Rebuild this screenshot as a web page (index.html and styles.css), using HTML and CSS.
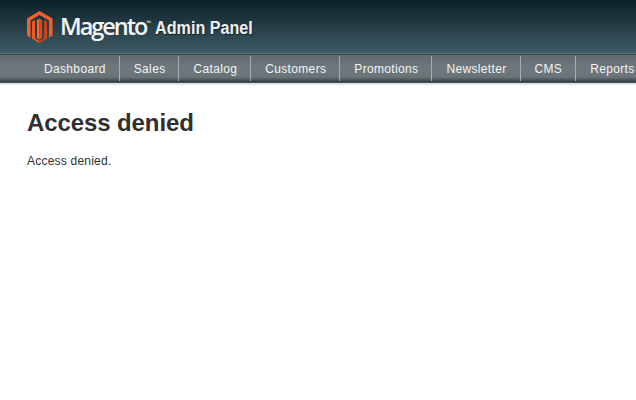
FILE: index.html
```html
<!DOCTYPE html>
<html lang="en">
<head>
<meta charset="utf-8">
<title>Access denied</title>
<link rel="stylesheet" href="styles.css">
</head>
<body>
<header class="header">
  <svg class="logo-mark" width="28" height="32" viewBox="0 0 28 32" aria-hidden="true">
    <path fill="#f4602c" d="M13.5 0 L26.5 7.5 V24.5 L23 26.5 V9.5 L13.5 4 L4.5 9.5 V26.5 L1 24.5 V7.5 Z"/>
    <path fill="#f66a34" d="M11 9 L13.5 7.5 V28.5 L11 27 Z"/>
    <path fill="#dd4a1c" d="M13.5 7.5 L16 9 V27 L13.5 28.5 Z"/>
    <path fill="#f0561f" d="M6 10.5 L9 9 V27.5 L13.5 30 V32 L6 27.8 Z"/>
    <path fill="#cc4016" d="M21 10.5 L18 9 V27.5 L13.5 30 V32 L21 27.8 Z"/>
  </svg>
  <span class="brand">Magento<sup class="tm">™</sup></span>
  <span class="panel">Admin Panel</span>
</header>
<nav class="nav">
  <a class="nav-item">Dashboard</a>
  <a class="nav-item">Sales</a>
  <a class="nav-item">Catalog</a>
  <a class="nav-item">Customers</a>
  <a class="nav-item">Promotions</a>
  <a class="nav-item">Newsletter</a>
  <a class="nav-item">CMS</a>
  <a class="nav-item">Reports</a>
</nav>
<main class="content">
  <h1 class="title">Access denied</h1>
  <p class="message">Access denied.</p>
</main>
</body>
</html>
```
FILE: styles.css
```css
html, body {
  margin: 0;
  padding: 0;
  height: 100%;
  overflow: hidden;
  background: #fff;
  font-family: "Liberation Sans", Arial, sans-serif;
}
.header {
  height: 54px;
  box-sizing: border-box;
  display: flex;
  align-items: center;
  padding: 0 0 0 26px;
  background: linear-gradient(#0b2128, #3f5a64);
  border-bottom: 1px solid #5a7179;
  color: #fff;
}
.logo-mark {
  flex: none;
  margin-right: 6px;
}
.brand {
  font-family: "Open Sans", sans-serif;
  font-size: 23.5px;
  font-weight: 600;
  letter-spacing: -2px;
  line-height: 1;
  color: #f4f6f6;
  margin-right: 4px;
}
.tm {
  font-size: 6px;
  font-weight: 400;
  letter-spacing: 0;
  vertical-align: 10px;
  line-height: 0;
}
.panel {
  font-family: "Liberation Sans", sans-serif;
  font-weight: bold;
  font-size: 19px;
  transform: scaleX(0.85);
  transform-origin: left center;
  margin-top: 3px;
  color: #eef1f1;
  text-shadow: 1px 1px 1px #10242b;
  white-space: nowrap;
}
.nav {
  height: 29px;
  box-sizing: border-box;
  display: flex;
  padding: 1px 0 0 30px;
  background: linear-gradient(#5f686d, #6f787d 50%, #6a7377 85%, #3e474b);
  border-top: 1px solid #38434a;
  border-bottom: 2px solid #3f484c;
  box-shadow: 0 2px 0 #dfe5e6;
  overflow: hidden;
}
.nav-item {
  flex: none;
  padding: 0 13px 0 14px;
  height: 26px;
  line-height: 26px;
  font-size: 12px;
  letter-spacing: 0.34px;
  color: #f2f4f4;
  border-right: 1px solid #a3abae;
}
.nav-item:last-child {
  border-right: 0;
}
.content {
  padding: 26px 27px 0;
}
.title {
  margin: 0;
  font-size: 24px;
  line-height: 28px;
  letter-spacing: -0.1px;
  font-weight: bold;
  color: #2f2f2f;
}
.message {
  margin: 16px 0 0;
  font-size: 12px;
  line-height: 16px;
  letter-spacing: 0.22px;
  color: #2f2f2f;
}
```
